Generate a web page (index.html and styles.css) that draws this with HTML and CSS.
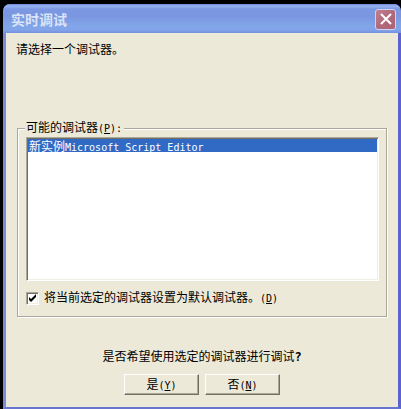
FILE: index.html
```html
<!DOCTYPE html>
<html lang="zh-CN">
<head>
<meta charset="utf-8">
<title>实时调试</title>
<link rel="stylesheet" href="styles.css">
</head>
<body>
<main class="dialog">
  <header class="titlebar">
    <h1 class="title">实时调试</h1>
    <button class="close" type="button" aria-label="关闭">
      <svg viewBox="0 0 12 12" width="12" height="12" aria-hidden="true"><path d="M1 1L11 11M11 1L1 11"/></svg>
    </button>
  </header>
  <form class="content">
    <p class="prompt">请选择一个调试器。</p>
    <fieldset class="group">
      <legend>可能的调试器<span class="latin">(<u>P</u>):</span></legend>
      <ul class="list" role="listbox" aria-label="可能的调试器" tabindex="0">
        <li class="item" role="option" aria-selected="true">新实例<span class="latin">Microsoft Script Editor</span></li>
      </ul>
      <label class="default"><input class="check" type="checkbox" checked><span>将当前选定的调试器设置为默认调试器。<span class="latin">(<u>D</u>)</span></span></label>
    </fieldset>
    <p class="question">是否希望使用选定的调试器进行调试<span class="latin mark">?</span></p>
    <div class="actions">
      <button class="button" type="button">是<span class="latin">(<u>Y</u>)</span></button>
      <button class="button" type="button">否<span class="latin">(<u>N</u>)</span></button>
    </div>
  </form>
</main>
</body>
</html>
```
FILE: styles.css
```css
* {
  box-sizing: border-box;
}

body {
  margin: 0;
  padding: 4px 0 0 3px;
  min-height: 100vh;
  display: flex;
  background: #000;
  color: #000;
  font: 12px/14px "Noto Sans CJK SC", sans-serif;
}

p,
h1,
ul {
  margin: 0;
  padding: 0;
}

.latin {
  font-family: "DejaVu Sans Mono", monospace;
  font-size: 10px;
}

.mark {
  font-weight: bold;
  font-size: 12px;
}

.dialog {
  flex: 1;
  display: flex;
  flex-direction: column;
  border: 3px solid #7a8ae2;
  border-right-color: #5c62d0;
  border-bottom: 2px solid #6875d0;
  border-top: 0;
  border-radius: 7px 7px 0 0;
  background: #ece9d8;
}

.titlebar {
  display: flex;
  align-items: center;
  justify-content: space-between;
  height: 29px;
  margin: 0 -3px;
  padding: 1px 5px 0 8px;
  border-radius: 7px 7px 0 0;
  background: linear-gradient(#6a86dc 0, #98b3ef 2px, #7c98e2 5px, #7b96e0 12px, #82a6e9 22px, #82a4e8 26px, #7590df 29px);
}

.title {
  color: #d9e4f8;
  font-size: 14px;
  line-height: 20px;
  font-weight: bold;
}

.close {
  display: grid;
  place-items: center;
  width: 21px;
  height: 21px;
  padding: 0;
  border: 1px solid #cfd3f3;
  border-radius: 3px;
  background: linear-gradient(135deg, #c0808f, #b06a7c 50%, #ad6271);
}

.close path {
  fill: none;
  stroke: #fff;
  stroke-width: 2;
}

.content {
  flex: 1;
  padding: 9px 11px 0;
}

.prompt {
  margin-left: -1px;
}

.group {
  min-width: 0;
  margin: 64px 0 0;
  padding: 0 7px 10px 8px;
  border: 1px solid #aca899;
  box-shadow: 1px 1px 0 #fff, inset 1px 1px 0 #fff;
}

.group legend {
  padding: 0 2px 0 1px;
  margin-left: -1px;
  background: #ece9d8;
}

.list {
  height: 144px;
  margin-top: 1px;
  border: 1px solid;
  border-color: #aca899 #fff #fff #aca899;
  box-shadow: inset 1px 1px 0 #716f64, inset -1px -1px 0 #f1efe2;
  padding: 1px;
  background: #fff;
  list-style: none;
}

.item {
  height: 13px;
  padding-left: 1px;
  line-height: 13px;
  background: #316ac5;
  color: #fff;
}

.default {
  display: flex;
  align-items: center;
  gap: 5px;
  margin-top: 9px;
}

.check {
  appearance: none;
  width: 13px;
  height: 13px;
  margin: 0;
  border: 1px solid;
  border-color: #aca899 #fff #fff #aca899;
  box-shadow: inset 1px 1px 0 #716f64, inset -1px -1px 0 #f1efe2;
  background: #fff;
}

.check:checked {
  background: #fff url("data:image/svg+xml,%3Csvg xmlns='http://www.w3.org/2000/svg' viewBox='0 0 11 11'%3E%3Cpath d='M2 4v3l2 2 5-5V1L4 6z'/%3E%3C/svg%3E") center / 11px 11px no-repeat;
}

.question {
  margin-top: 32px;
  text-align: center;
}

.actions {
  display: flex;
  justify-content: center;
  gap: 6px;
  margin-top: 10px;
}

.button {
  width: 75px;
  height: 21px;
  padding: 0;
  border: 1px solid;
  border-color: #fff #716f64 #716f64 #fff;
  box-shadow: inset -1px -1px 0 #aca899;
  background: #ece9d8;
  color: #000;
  font: inherit;
}
```
